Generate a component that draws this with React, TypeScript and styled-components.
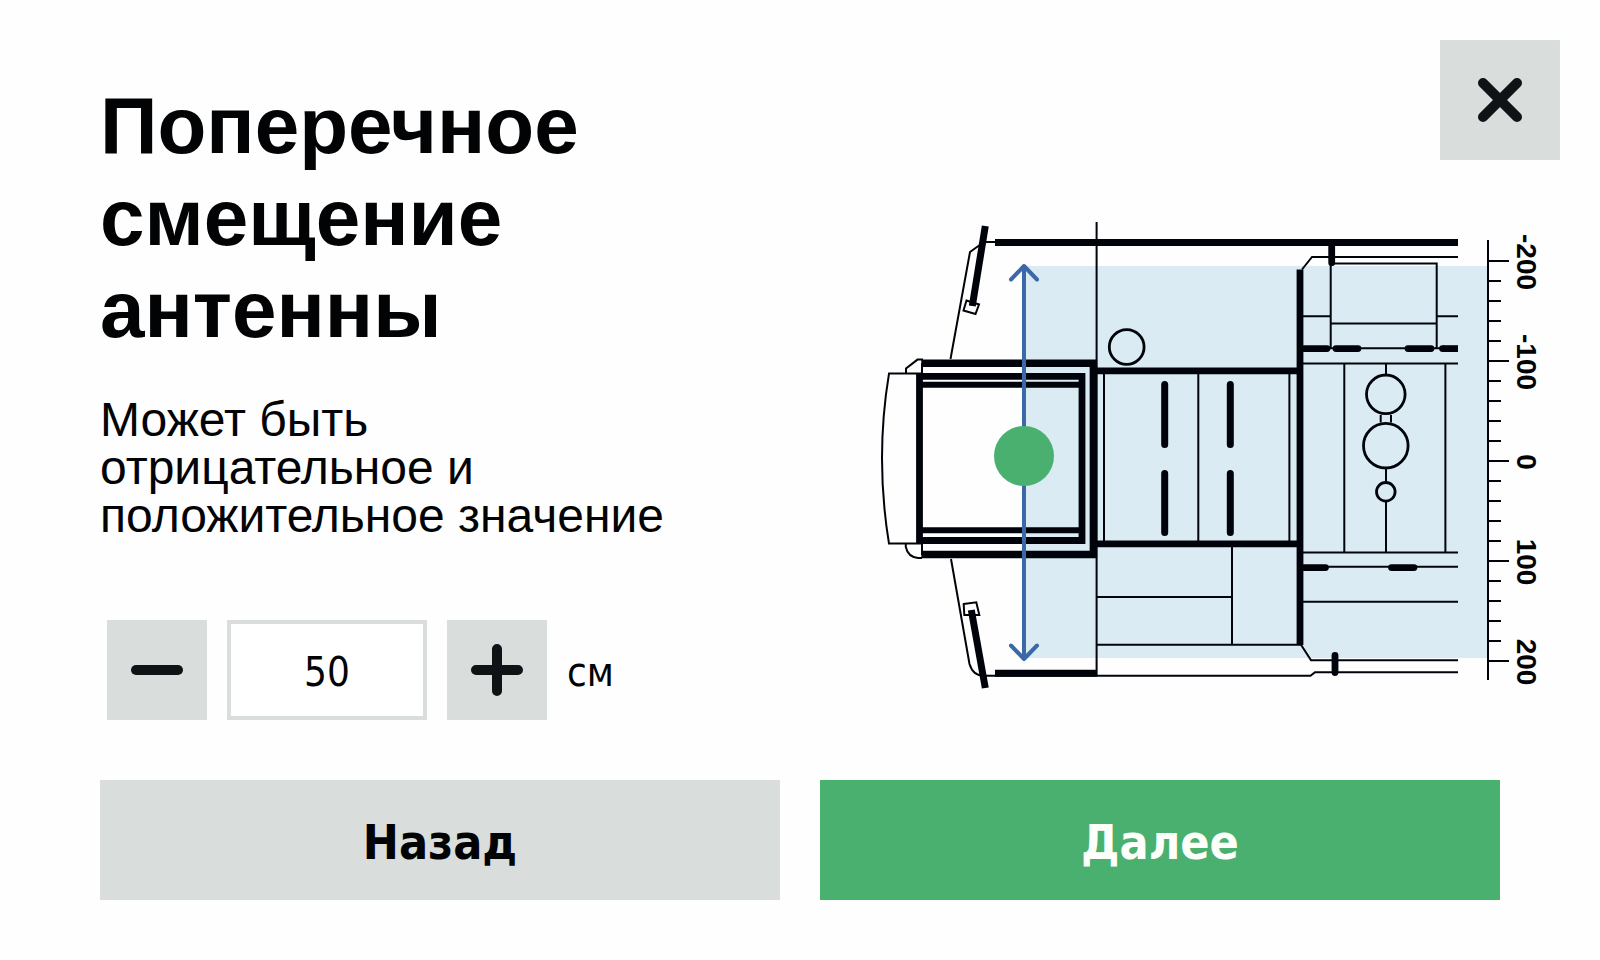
import React, { useState } from 'react';
import styled, { createGlobalStyle } from 'styled-components';

const GlobalStyle = createGlobalStyle`
  *, *::before, *::after { box-sizing: border-box; }
  body {
    margin: 0;
    background: #fefefe;
    color: #020305;
    font-family: "Liberation Sans", Arial, sans-serif;
  }
`;

const controlFont = '"DejaVu Sans Condensed", "DejaVu Sans", Tahoma, sans-serif';
const grey = '#d9dddb';
const green = '#49b06f';

const Page = styled.main`
  min-height: 100vh;
  padding: 40px 40px 60px 100px;
`;

const Content = styled.div`
  display: grid;
  grid-template-columns: minmax(0, 39fr) minmax(0, 34fr);
`;

const Settings = styled.section`
  padding-top: 40px;
`;

const Title = styled.h1`
  max-width: 600px;
  margin: 0 0 40px;
  font-size: 80px;
  line-height: 92px;
  font-weight: 700;
`;

const Hint = styled.p`
  max-width: 600px;
  margin: 0 0 80px;
  font-size: 48px;
  line-height: 48px;
`;

const Stepper = styled.div`
  display: flex;
  align-items: center;
  gap: 20px;
  padding-left: 7px;
  font-family: ${controlFont};
  font-size: 40px;
`;

const IconButton = styled.button<{ $size: number }>`
  display: flex;
  align-items: center;
  justify-content: center;
  flex: none;
  width: ${({ $size }) => $size}px;
  height: ${({ $size }) => $size}px;
  padding: 0;
  border: 0;
  background: ${grey};
  cursor: pointer;
`;

const Icon = styled.svg`
  display: block;
  width: 60px;
  height: 60px;
  fill: none;
  stroke: #0f1315;
  stroke-width: 10;
  stroke-linecap: round;
`;

const ValueInput = styled.input`
  width: 200px;
  height: 100px;
  padding: 4px 0 0;
  border: 4px solid ${grey};
  border-radius: 0;
  background: #fff;
  color: #020305;
  font: inherit;
  text-align: center;
`;

const Unit = styled.label`
  padding-top: 4px;
`;

const Visual = styled.section`
  display: flex;
  flex-direction: column;
  align-items: flex-end;
  gap: 60px;
`;

const Drawing = styled.svg`
  display: block;
  width: 100%;
  height: auto;
  fill: none;
  stroke: #00040a;
  stroke-width: 2;
`;

const Actions = styled.nav`
  display: grid;
  grid-template-columns: 1fr 1fr;
  gap: 40px;
  padding: 60px 60px 0 0;
`;

const ActionButton = styled.button<{ $primary?: boolean }>`
  height: 120px;
  padding: 4px 0 0;
  border: 0;
  background: ${({ $primary }) => ($primary ? green : grey)};
  color: ${({ $primary }) => ($primary ? '#fcfffa' : '#020305')};
  font-family: ${controlFont};
  font-size: 48px;
  font-weight: 700;
  cursor: pointer;
`;

const ticks = Array.from({ length: 21 }, (_, i) => i * 20 - 200);

function Scale() {
  return (
    <g>
      <path d="M1488 240V680" />
      {ticks.map((v) => {
        const y = 461 + v;
        const major = v % 100 === 0;
        return (
          <g key={v}>
            <path d={`M1488 ${y}H${major ? 1509 : 1501}`} />
            {major && (
              <text
                transform={`translate(1517 ${y + 1}) rotate(90)`}
                textAnchor="middle"
                fontSize="28"
                fontWeight="700"
                fontFamily='"Liberation Sans", Arial, sans-serif'
                fill="#020305"
                stroke="none"
              >
                {v}
              </text>
            )}
          </g>
        );
      })}
    </g>
  );
}

function TractorDiagram() {
  return (
    <Drawing viewBox="880 220 680 480" role="img" aria-label="Трактор, вид сверху">
      <rect x="1024" y="266" width="463" height="392" fill="#daebf3" stroke="none" />

      {/* front weight and hood */}
      <path d="M922 373.6H889Q875 458 889 543.6H922" />
      <path d="M923 359.6H917.5L906 368.5V373M905.8 544V547Q908 557 918 558H922M922 363V376M922 541V555" />
      <path d="M921.300 363.2H1093.400V554.500H921.300" strokeWidth="7.5" />
      <path d="M919.500 544V376.300H1082V540.500H919.500" strokeWidth="6.8" />
      <path d="M919 384.700H1080M919 530.200H1080" strokeWidth="6" />

      {/* fenders and mirrors */}
      <path d="M995 242H984L970 252L950.5 359" />
      <path d="M951 559L969.5 664Q973 675.8 984 675.8H1310.5L1315 672.3H1458" />
      <path d="M995 242.6H1458" strokeWidth="7" />
      <path d="M995 673.2H1097" strokeWidth="7" />
      <path d="M985.3 226L972.3 306M971.3 610L985.3 688" strokeWidth="7" />
      <path d="M966.5 300.5L979 304.5L975.5 314L963.5 310.500ZM963.7 604L976.3 602.3L979.3 615H964.300Z" />
      <path d="M1096.6 222V676" />

      {/* cab */}
      <path d="M1097 370.8H1298M1097 543.8H1298" strokeWidth="6.8" />
      <path d="M1300 269.5V645" strokeWidth="6.8" />
      <path d="M1104 374V541M1198.3 374V541M1289.4 374V541" />
      <path
        d="M1164.7 384.5V444.5M1230.3 384.5V444.5M1164.7 473.5V532.5M1230.3 473.5V532.5"
        strokeWidth="7"
        strokeLinecap="round"
      />
      <circle cx="1126.7" cy="347" r="17.4" strokeWidth="2.8" />
      <path d="M1097 597H1232M1232 547V645M1097 644.8H1301L1311 660.3H1458M1302 269.5L1312 257H1458" />

      {/* rear body */}
      <path d="M1330.7 348V263.5H1436.7V348M1330.7 323.4H1436.7M1303 316.2H1330.7M1436.7 316.2H1458" />
      <path d="M1303 348.3H1458M1303 363.5H1458M1303 552.5H1458M1303 566.8H1458M1303 601.7H1458" />
      <path d="M1344.3 363.5V552.5M1445.4 363.5V552.5M1386 363.5V375M1386 469V482M1386 502V552.5M1380.7 415V422.5M1391 415V422.5" />
      <circle cx="1385.8" cy="394.3" r="19.3" strokeWidth="2.8" />
      <circle cx="1385.8" cy="445.7" r="22.3" strokeWidth="2.8" />
      <circle cx="1385.8" cy="491.8" r="9.3" strokeWidth="2.8" />
      <path
        d="M1304 348.6H1327M1336 348.6H1358M1408 348.6H1431M1304 567.6H1325.5M1391.5 567.6H1414M1331.7 246V262.7M1335 655.5V672.5"
        strokeWidth="6.8"
        strokeLinecap="round"
      />
      <path d="M1442.5 348.6H1458" strokeWidth="6.8" />
      <circle cx="1442.5" cy="348.6" r="3.4" fill="#00040a" stroke="none" />

      <Scale />

      {/* antenna position */}
      <path
        d="M1024 266V659M1011 279.5L1024 266L1037 279.5M1011 645.5L1024 659L1037 645.5"
        stroke="#3b69a7"
        strokeWidth="4"
        strokeLinecap="round"
        strokeLinejoin="round"
      />
      <circle cx="1024" cy="456" r="30" fill={green} stroke="none" />
    </Drawing>
  );
}

export default function App() {
  const [value, setValue] = useState('50');
  const step = (delta: number) => setValue((v) => String((Number(v) || 0) + delta));

  return (
    <>
      <GlobalStyle />
      <Page>
        <Content>
          <Settings>
            <Title>Поперечное смещение антенны</Title>
            <Hint>Может быть отрицательное и положительное значение</Hint>
            <Stepper>
              <IconButton type="button" $size={100} aria-label="Уменьшить" onClick={() => step(-1)}>
                <Icon viewBox="0 0 60 60">
                  <path d="M9 30H51" />
                </Icon>
              </IconButton>
              <ValueInput
                id="offset"
                type="text"
                inputMode="numeric"
                value={value}
                onChange={(e) => setValue(e.target.value)}
              />
              <IconButton type="button" $size={100} aria-label="Увеличить" onClick={() => step(1)}>
                <Icon viewBox="0 0 60 60">
                  <path d="M9 30H51M30 9V51" />
                </Icon>
              </IconButton>
              <Unit htmlFor="offset">см</Unit>
            </Stepper>
          </Settings>
          <Visual>
            <IconButton type="button" $size={120} aria-label="Закрыть">
              <Icon viewBox="0 0 60 60">
                <path d="M13 13L47 47M47 13L13 47" />
              </Icon>
            </IconButton>
            <TractorDiagram />
          </Visual>
        </Content>
        <Actions>
          <ActionButton type="button">Назад</ActionButton>
          <ActionButton type="button" $primary>
            Далее
          </ActionButton>
        </Actions>
      </Page>
    </>
  );
}
